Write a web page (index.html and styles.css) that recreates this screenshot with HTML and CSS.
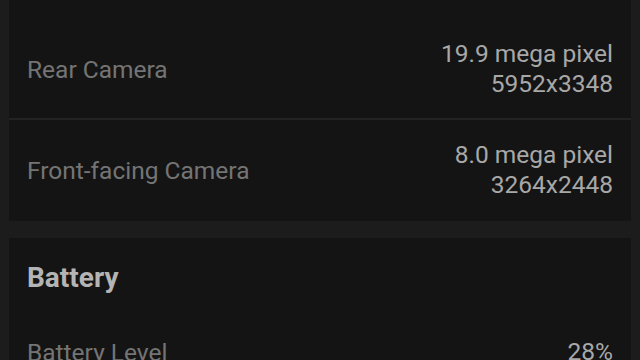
FILE: index.html
```html
<!DOCTYPE html>
<html lang="en">
<head>
    <meta charset="UTF-8">
    <meta name="viewport" content="width=device-width, initial-scale=1.0">
    <title>Device Info</title>
    <link rel="stylesheet" href="styles.css">
</head>
<body>
    <!-- Camera -->
    <div class="card">
        <div class="row row-first">
            <div class="label">Rear Camera</div>
            <div class="value">19.9 mega pixel<br>5952x3348</div>
        </div>
        <div class="divider"></div>
        <div class="row row-last">
            <div class="label">Front-facing Camera</div>
            <div class="value">8.0 mega pixel<br>3264x2448</div>
        </div>
    </div>

    <!-- Battery -->
    <div class="card">
        <h2 class="card-title">Battery</h2>
        <div class="row row-battery">
            <div class="label">Battery Level</div>
            <div class="value">28%</div>
        </div>
    </div>
</body>
</html>
```

FILE: styles.css
```css
/* Body styling */
body {
    font-family: Roboto, "Noto Sans", sans-serif;
    background: #1c1c1c;
    color: #a8a8a8;
    margin: 0;
    padding: 0 9px;
    overflow: hidden;
}

/* Cards */
.card {
    background: #141414;
    margin-bottom: 17px;
}

.card-title {
    margin: 0;
    padding: 18px 18px 0;
    font-size: 28px;
    font-weight: bold;
    color: #b4b4b4;
    line-height: 44px;
}

/* Rows */
.row {
    display: flex;
    justify-content: space-between;
    align-items: center;
    padding: 20px 18px;
    min-height: 60px;
}

.row-first {
    padding-top: 39px;
    padding-bottom: 19px;
}

.row-last {
    padding-bottom: 21px;
}

.row-battery {
    padding-top: 22px;
}

.divider {
    height: 2px;
    background: #232323;
}

.label {
    font-size: 24.5px;
    color: #747474;
}

.value {
    font-size: 24.5px;
    line-height: 30px;
    text-align: right;
    color: #a8a8a8;
}
```
